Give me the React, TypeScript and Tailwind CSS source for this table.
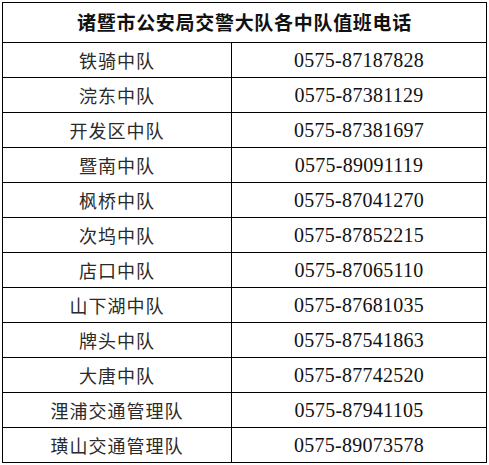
const rows: [string, string][] = [
  ["铁骑中队", "0575-87187828"],
  ["浣东中队", "0575-87381129"],
  ["开发区中队", "0575-87381697"],
  ["暨南中队", "0575-89091119"],
  ["枫桥中队", "0575-87041270"],
  ["次坞中队", "0575-87852215"],
  ["店口中队", "0575-87065110"],
  ["山下湖中队", "0575-87681035"],
  ["牌头中队", "0575-87541863"],
  ["大唐中队", "0575-87742520"],
  ["浬浦交通管理队", "0575-87941105"],
  ["璜山交通管理队", "0575-89073578"],
];

const cjk = { fontFamily: '"Noto Sans CJK SC", sans-serif' };
const num = { fontFamily: '"Liberation Serif", "Noto Sans CJK SC", serif' };

export default function App() {
  return (
    <div className="w-[489px] h-[465px] bg-white pt-[2px] pl-[2px]">
      <div className="w-[485px] border-l border-r border-t border-black">
        <div
          className="h-[40px] border-b border-black flex items-center justify-center text-[19px] font-bold tracking-[0.7px] text-[#111]"
          style={cjk}
        >
          诸暨市公安局交警大队各中队值班电话
        </div>
        {rows.map(([name, phone]) => (
          <div key={name} className="h-[35px] flex border-b border-black">
            <div
              className="w-[229px] border-r border-black flex items-center justify-center text-[18px] tracking-[1px] text-[#2a2a2a]"
              style={cjk}
            >
              {name}
            </div>
            <div
              className="flex-1 flex items-center justify-center text-[20px] tracking-[0.25px] text-[#111]"
              style={num}
            >
              {phone}
            </div>
          </div>
        ))}
      </div>
    </div>
  );
}
